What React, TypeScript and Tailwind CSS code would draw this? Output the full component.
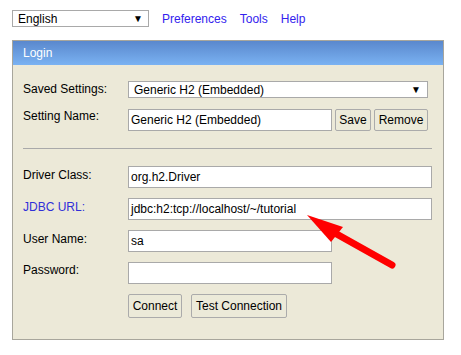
import React from "react";

const field = "h-[22px] border border-[#a9a9a9] bg-white flex items-center pl-[2px] leading-[14px] overflow-hidden whitespace-nowrap";
const btn = "h-[22px] border border-[#ababab] rounded-[2px] bg-[#ecead9] flex items-center justify-center leading-[14px]";

export default function App() {
  return (
    <div className="relative w-[461px] h-[355px] bg-white pt-[10px] pl-[12px] text-[12px] leading-[14px] text-black font-['Liberation_Sans',Arial,sans-serif]">
      <div className="flex items-center h-[17px]">
        <div className="w-[137px] h-[17px] border border-[#a9a9a9] bg-white flex items-center justify-between pl-[5px] pr-[5px]">
          <span>English</span>
          <span className="text-[10px] leading-[10px]">▼</span>
        </div>
        <div className="ml-[13px] flex gap-[13px] text-[#3322ee]">
          <span>Preferences</span>
          <span>Tools</span>
          <span>Help</span>
        </div>
      </div>

      <div className="mt-[13px] w-[432px] h-[300px] border border-[#a8a69c] bg-[#ece9d8]">
        <div className="h-[24px] bg-gradient-to-b from-[#5a88cd] to-[#7ab2f2] text-white flex items-center pl-[10px] text-[12px]">
          Login
        </div>

        <div className="pl-[10px] pr-[10px]">
          <div className="mt-[16px] flex items-start">
            <div className="w-[105px] pt-[1px]">Saved Settings:</div>
            <div className="w-[300px] h-[17px] border border-[#a9a9a9] bg-white flex items-center justify-between pl-[5px] pr-[6px]">
              <span>Generic H2 (Embedded)</span>
              <span className="text-[10px] leading-[10px]">▼</span>
            </div>
          </div>

          <div className="mt-[11px] flex items-start">
            <div className="w-[105px] pt-[0px]">Setting Name:</div>
            <div className={`${field} w-[204px]`}>Generic H2 (Embedded)</div>
            <div className={`${btn} ml-[3px] w-[36px]`}>Save</div>
            <div className={`${btn} ml-[3px] w-[54px]`}>Remove</div>
          </div>

          <div className="mt-[17px] h-px w-[409px] bg-[#a9a9a9]" />

          <div className="mt-[17px] flex items-start">
            <div className="w-[105px] pt-[2px]">Driver Class:</div>
            <div className={`${field} w-[304px]`}>org.h2.Driver</div>
          </div>

          <div className="mt-[10px] flex items-start">
            <div className="w-[105px] pt-[2px] text-[#3030d8]">JDBC URL:</div>
            <div className={`${field} w-[304px]`}>jdbc:h2:tcp://localhost/~/tutorial</div>
          </div>

          <div className="mt-[10px] flex items-start">
            <div className="w-[105px] pt-[2px]">User Name:</div>
            <div className={`${field} w-[204px]`}>sa</div>
          </div>

          <div className="mt-[10px] flex items-start">
            <div className="w-[105px] pt-[1px]">Password:</div>
            <div className={`${field} w-[204px]`}></div>
          </div>

          <div className="mt-[10px] flex items-start pl-[105px]">
            <div className={`${btn} h-[24px] w-[54px]`}>Connect</div>
            <div className={`${btn} h-[24px] ml-[9px] w-[96px]`}>Test Connection</div>
          </div>
        </div>
      </div>

      <svg className="absolute left-0 top-0 pointer-events-none" width="461" height="355" viewBox="0 0 461 355">
        <line x1="392" y1="265" x2="333" y2="232" stroke="#ff0000" strokeWidth="7" strokeLinecap="round" />
        <polygon points="307,215 343,227 331,242" fill="#ff0000" />
      </svg>
    </div>
  );
}
